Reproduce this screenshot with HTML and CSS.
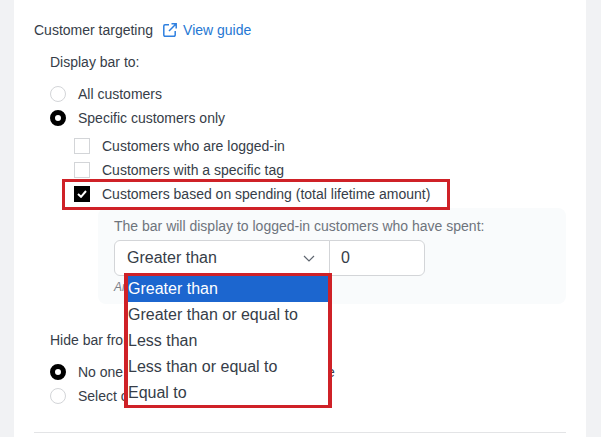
FILE: index.html
```html
<!DOCTYPE html>
<html lang="en">
<head>
<meta charset="UTF-8">
<meta name="viewport" content="width=device-width, initial-scale=1.0">
<title>Customer targeting</title>
<link rel="stylesheet" href="styles.css">
</head>
<body>

<div class="card">
  <div class="heading">
    <span>Customer targeting</span>
    <a class="guide-link" href="#">
      <svg class="guide-icon" width="14" height="14" viewBox="0 0 14 14" fill="none" stroke="#2f80e0" stroke-width="1.5">
        <path d="M6 1.8H2a1.2 1.2 0 0 0-1.2 1.2v9a1.2 1.2 0 0 0 1.2 1.2h9a1.2 1.2 0 0 0 1.2-1.2V8"/>
        <path d="M8.5 .8h4.7v4.7M13.2 .8L6 8"/>
      </svg>
      View guide
    </a>
  </div>

  <div class="group">
    <div class="group-label">Display bar to:</div>
    <div class="options">
      <div class="option"><span class="radio"></span>All customers</div>
      <div class="option"><span class="radio checked"></span>Specific customers only</div>
    </div>

    <div class="checks">
      <div class="option"><span class="checkbox"></span>Customers who are logged-in</div>
      <div class="option"><span class="checkbox"></span>Customers with a specific tag</div>
      <div class="option">
        <span class="checkbox checked">
          <svg width="10" height="8" viewBox="0 0 10 8" fill="none" stroke="#fff" stroke-width="2"><path d="M1 4l3 2.8L9 1"/></svg>
        </span>
        Customers based on spending (total lifetime amount)
        <div class="highlight-box"></div>
      </div>
    </div>

    <div class="spend-panel">
      <div class="spend-label">The bar will display to logged-in customers who have spent:</div>
      <div class="controls">
        <div class="select">
          Greater than
          <svg class="chevron" width="12" height="7" viewBox="0 0 12 7" fill="none" stroke="#5f6670" stroke-width="1.2"><path d="M1 1l5 5 5-5"/></svg>
          <ul class="dropdown">
            <li class="active">Greater than</li>
            <li>Greater than or equal to</li>
            <li>Less than</li>
            <li>Less than or equal to</li>
            <li>Equal to</li>
          </ul>
        </div>
        <div class="amount">0</div>
      </div>
      <div class="hint">Amount in store currency</div>
    </div>

    <div class="group-label hide-label">Hide bar from:</div>
    <div class="options">
      <div class="option"><span class="radio checked"></span>No one, always show the bar to everyone</div>
      <div class="option"><span class="radio"></span>Select customers</div>
    </div>
  </div>

  <div class="divider"></div>
</div>

</body>
</html>
```

FILE: styles.css
```css
* {
  margin: 0;
  padding: 0;
  box-sizing: border-box;
  font-family: 'Liberation Sans', Arial, sans-serif;
}

body {
  background: #f1f2f4;
  color: #363d48;
  font-size: 14px;
  height: 437px;
  overflow: hidden;
}

.card {
  background: #fff;
  margin-left: 14px;
  width: 572px;
  height: 437px;
  padding: 20px 20px 0;
}

.heading {
  display: flex;
  align-items: center;
  height: 20px;
}

.guide-link {
  display: flex;
  align-items: center;
  margin-left: 10px;
  color: #2577d3;
  text-decoration: none;
}

.guide-icon {
  margin-right: 6px;
}

.group {
  padding-left: 16px;
}

.group-label {
  height: 20px;
  line-height: 20px;
  margin-top: 12px;
  margin-bottom: 10px;
}

.hide-label {
  margin-top: 26px;
}

.option {
  position: relative;
  display: flex;
  align-items: center;
  height: 24px;
}

.radio {
  width: 16px;
  height: 16px;
  margin-right: 12px;
  border: 1px solid #d3d5d8;
  border-radius: 50%;
}

.radio.checked {
  border: 5px solid #000;
}

.checks {
  margin-top: 4px;
  padding-left: 24px;
}

.checkbox {
  display: flex;
  align-items: center;
  justify-content: center;
  width: 16px;
  height: 16px;
  margin-right: 12px;
  border: 1px solid #d3d5d8;
}

.checkbox.checked {
  background: #000;
  border-color: #000;
}

.highlight-box {
  position: absolute;
  left: -12px;
  top: -3px;
  width: 388px;
  height: 31px;
  border: 3px solid #cf2127;
}

.spend-panel {
  margin: 2px 0 0 48px;
  padding: 8px 16px;
  height: 96px;
  background: #f9fbfc;
  border-radius: 8px;
}

.spend-label {
  height: 20px;
  line-height: 20px;
  color: #6e747c;
}

.controls {
  display: flex;
  margin-top: 4px;
  height: 36px;
  font-size: 16px;
}

.select {
  position: relative;
  display: flex;
  align-items: center;
  justify-content: space-between;
  width: 216px;
  padding: 0 14px 0 12px;
  background: #fff;
  border: 1px solid #d3d5d8;
  border-radius: 6px 0 0 6px;
}

.amount {
  display: flex;
  align-items: center;
  width: 96px;
  margin-left: -1px;
  padding-left: 11px;
  background: #fff;
  border: 1px solid #d3d5d8;
  border-radius: 0 6px 6px 0;
}

.dropdown {
  position: absolute;
  z-index: 10;
  left: 9px;
  top: 32px;
  width: 208px;
  height: 135px;
  overflow: hidden;
  border: solid #cf2127;
  border-width: 3px 4px;
  background: #fff;
  list-style: none;
}

.dropdown li {
  height: 26px;
  line-height: 25px;
}

.dropdown .active {
  background: #1c66cf;
  color: #fff;
}

.hint {
  margin-top: 2px;
  height: 18px;
  line-height: 18px;
  font-size: 12px;
  font-style: italic;
  color: #7b8088;
}

.divider {
  margin-top: 24px;
  border-top: 1px solid #e3e4e6;
}
```
